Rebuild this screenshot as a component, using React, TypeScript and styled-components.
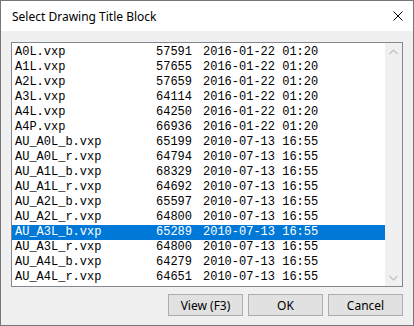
import styled, { createGlobalStyle } from "styled-components";

const GlobalStyle = createGlobalStyle`
  html, body {
    margin: 0;
    padding: 0;
    background: #ffffff;
  }
`;

const files = [
  { name: "A0L.vxp", size: "57591", date: "2016-01-22 01:20" },
  { name: "A1L.vxp", size: "57655", date: "2016-01-22 01:20" },
  { name: "A2L.vxp", size: "57659", date: "2016-01-22 01:20" },
  { name: "A3L.vxp", size: "64114", date: "2016-01-22 01:20" },
  { name: "A4L.vxp", size: "64250", date: "2016-01-22 01:20" },
  { name: "A4P.vxp", size: "66936", date: "2016-01-22 01:20" },
  { name: "AU_A0L_b.vxp", size: "65199", date: "2010-07-13 16:55" },
  { name: "AU_A0L_r.vxp", size: "64794", date: "2010-07-13 16:55" },
  { name: "AU_A1L_b.vxp", size: "68329", date: "2010-07-13 16:55" },
  { name: "AU_A1L_r.vxp", size: "64692", date: "2010-07-13 16:55" },
  { name: "AU_A2L_b.vxp", size: "65597", date: "2010-07-13 16:55" },
  { name: "AU_A2L_r.vxp", size: "64800", date: "2010-07-13 16:55" },
  { name: "AU_A3L_b.vxp", size: "65289", date: "2010-07-13 16:55" },
  { name: "AU_A3L_r.vxp", size: "64800", date: "2010-07-13 16:55" },
  { name: "AU_A4L_b.vxp", size: "64279", date: "2010-07-13 16:55" },
  { name: "AU_A4L_r.vxp", size: "64651", date: "2010-07-13 16:55" },
];

const selectedIndex = 12;

function App() {
  return (
    <>
      <GlobalStyle />
      <StyledWindow>
        <StyledTitleBar>
          <StyledTitle>Select Drawing Title Block</StyledTitle>
          <StyledClose aria-label="Close">
            <svg width="10" height="10" viewBox="0 0 10 10">
              <path d="M0.5 0.5 L9.5 9.5 M9.5 0.5 L0.5 9.5" stroke="#000" strokeWidth="1" fill="none" />
            </svg>
          </StyledClose>
        </StyledTitleBar>
        <StyledBody>
          <StyledListBox>
            <StyledList>
              {files.map((f, index) => (
                <StyledRow key={f.name} $selected={index === selectedIndex}>
                  <span>{f.name}</span>
                  <span>{f.size}</span>
                  <span>{f.date}</span>
                </StyledRow>
              ))}
            </StyledList>
            <StyledScrollBar>
              <StyledArrow>
                <svg width="9" height="6" viewBox="0 0 9 6">
                  <path d="M0.5 5 L4.5 1 L8.5 5" stroke="#c2c2c2" strokeWidth="1.2" fill="none" />
                </svg>
              </StyledArrow>
              <StyledArrow>
                <svg width="9" height="6" viewBox="0 0 9 6">
                  <path d="M0.5 1 L4.5 5 L8.5 1" stroke="#c2c2c2" strokeWidth="1.2" fill="none" />
                </svg>
              </StyledArrow>
            </StyledScrollBar>
          </StyledListBox>
          <StyledButtons>
            <StyledButton>View (F3)</StyledButton>
            <StyledButton>OK</StyledButton>
            <StyledButton>Cancel</StyledButton>
          </StyledButtons>
        </StyledBody>
      </StyledWindow>
    </>
  );
}

export default App;

const StyledWindow = styled.div`
  box-sizing: border-box;
  width: 414px;
  height: 326px;
  border: 1px solid #767676;
  background-color: #f0f0f0;
  display: flex;
  flex-direction: column;
  font-family: "Noto Sans", "Open Sans", sans-serif;
  font-size: 12px;
  color: #000;
`;

const StyledTitleBar = styled.div`
  height: 30px;
  background-color: #fff;
  display: flex;
  align-items: center;
  justify-content: space-between;
  padding: 0 10px 0 11px;
`;

const StyledTitle = styled.span`
  font-size: 12px;
`;

const StyledClose = styled.div`
  display: flex;
  align-items: center;
`;

const StyledBody = styled.div`
  flex: 1;
  display: flex;
  flex-direction: column;
  padding: 11px 10px 9px 10px;
  gap: 7px;
`;

const StyledListBox = styled.div`
  box-sizing: border-box;
  height: 245px;
  border: 1px solid #828790;
  background-color: #fff;
  display: flex;
`;

const StyledList = styled.div`
  flex: 1;
  padding-top: 2px;
  overflow: hidden;
`;

const StyledRow = styled.div<{ $selected: boolean }>`
  display: grid;
  grid-template-columns: 141px 47px 1fr;
  height: 15px;
  line-height: 15px;
  padding-left: 3px;
  font-family: "Liberation Mono", "Courier New", monospace;
  font-size: 12px;
  white-space: pre;
  color: ${(p) => (p.$selected ? "#fff" : "#000")};
  background-color: ${(p) => (p.$selected ? "#0078d7" : "transparent")};
`;

const StyledScrollBar = styled.div`
  width: 17px;
  background-color: #f0f0f0;
  display: flex;
  flex-direction: column;
  justify-content: space-between;
`;

const StyledArrow = styled.div`
  height: 17px;
  display: flex;
  align-items: center;
  justify-content: center;
`;

const StyledButtons = styled.div`
  display: flex;
  justify-content: flex-end;
  gap: 5px;
`;

const StyledButton = styled.button`
  box-sizing: border-box;
  width: 75px;
  height: 22px;
  margin: 0;
  padding: 0;
  border: 1px solid #adadad;
  background-color: #e1e1e1;
  font-family: "Noto Sans", "Open Sans", sans-serif;
  font-size: 12px;
  color: #000;
`;
